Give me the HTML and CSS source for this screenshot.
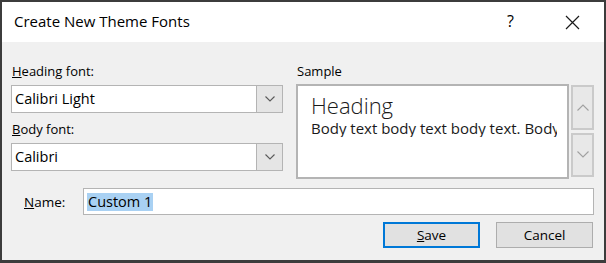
FILE: index.html
```html
<!DOCTYPE html>
<html lang="en">
<head>
    <meta charset="UTF-8">
    <meta name="viewport" content="width=device-width, initial-scale=1.0">
    <title>Create New Theme Fonts</title>
    <link rel="stylesheet" href="styles.css">
</head>
<body>
    <div class="dialog">
        <!-- Title bar -->
        <div class="titlebar">
            <span class="title">Create New Theme Fonts</span>
            <span class="help">?</span>
            <span class="close">
                <svg width="15" height="15" viewBox="0 0 15 15"><path d="M1 1 L14 14 M14 1 L1 14" stroke="#1a1a1a" stroke-width="1.2" fill="none"/></svg>
            </span>
        </div>

        <div class="content">
            <div class="top">
                <!-- Font pickers -->
                <div class="fonts">
                    <label class="field-label"><u>H</u>eading font:</label>
                    <div class="combo">
                        <span class="combo-value">Calibri Light</span>
                        <span class="combo-btn">
                            <svg width="10" height="6" viewBox="0 0 10 6"><path d="M0.5 0.5 L5 5 L9.5 0.5" stroke="#5a5a5a" stroke-width="1.1" fill="none"/></svg>
                        </span>
                    </div>
                    <label class="field-label body-label"><u>B</u>ody font:</label>
                    <div class="combo">
                        <span class="combo-value">Calibri</span>
                        <span class="combo-btn">
                            <svg width="10" height="6" viewBox="0 0 10 6"><path d="M0.5 0.5 L5 5 L9.5 0.5" stroke="#5a5a5a" stroke-width="1.1" fill="none"/></svg>
                        </span>
                    </div>
                </div>

                <!-- Sample preview -->
                <div class="sample">
                    <label class="field-label">Sample</label>
                    <div class="sample-row">
                        <div class="sample-box">
                            <div class="sample-heading">Heading</div>
                            <div class="sample-body">Body text body text body text. Body text</div>
                        </div>
                        <div class="spin">
                            <span class="spin-btn">
                                <svg width="12" height="7" viewBox="0 0 12 7"><path d="M0.5 6.5 L6 1 L11.5 6.5" stroke="#a0a0a0" stroke-width="1.1" fill="none"/></svg>
                            </span>
                            <span class="spin-btn">
                                <svg width="12" height="7" viewBox="0 0 12 7"><path d="M0.5 0.5 L6 6 L11.5 0.5" stroke="#a0a0a0" stroke-width="1.1" fill="none"/></svg>
                            </span>
                        </div>
                    </div>
                </div>
            </div>

            <!-- Name row -->
            <div class="name-row">
                <label class="name-label"><u>N</u>ame:</label>
                <div class="name-input"><span class="selected">Custom 1</span></div>
            </div>

            <!-- Buttons -->
            <div class="actions">
                <button class="btn btn-default"><u>S</u>ave</button>
                <button class="btn">Cancel</button>
            </div>
        </div>
    </div>
</body>
</html>
```

FILE: styles.css
```css
body {
    margin: 0;
    padding: 0;
    background-color: #fff;
    font-family: "Open Sans", "Noto Sans", sans-serif;
    color: #000;
}

.dialog {
    width: 606px;
    height: 263px;
    box-sizing: border-box;
    border: 2px solid #3c3c3c;
    border-bottom-width: 3px;
    background-color: #f0f0f0;
    display: flex;
    flex-direction: column;
}

.titlebar {
    height: 40px;
    background-color: #fff;
    display: flex;
    align-items: center;
    padding-left: 12px;
}

.title {
    flex: 1;
    font-size: 15px;
    padding-bottom: 2px;
}

.help {
    font-size: 16px;
    width: 14px;
    margin-right: 44px;
    padding-bottom: 2px;
}

.close {
    display: flex;
    margin-right: 24px;
}

.content {
    padding: 20px 10px 0 9px;
}

.top {
    display: grid;
    grid-template-columns: 272px minmax(0, 1fr);
    column-gap: 13px;
}

.field-label {
    display: block;
    font-size: 13px;
    line-height: 18px;
    padding-left: 1px;
    margin-bottom: 5px;
}

.body-label {
    margin-top: 7px;
}

.combo {
    height: 28px;
    box-sizing: border-box;
    border: 1px solid #b4b4b4;
    background-color: #fff;
    display: flex;
}

.combo-value {
    flex: 1;
    font-size: 14.5px;
    line-height: 26px;
    padding-left: 3px;
}

.combo-btn {
    width: 25px;
    background-color: #e5e5e5;
    border-left: 1px solid #b4b4b4;
    display: flex;
    align-items: center;
    justify-content: center;
}

.sample {
    min-width: 0;
}

.sample-row {
    display: flex;
    gap: 2px;
    margin-top: -1px;
}

.sample-box {
    flex: 1;
    min-width: 0;
    height: 95px;
    box-sizing: border-box;
    border: 2px solid #b4b4b4;
    background-color: #fff;
    padding: 5px 0 0 13px;
    overflow: hidden;
    white-space: nowrap;
}

.sample-heading {
    font-weight: 300;
    font-size: 22px;
    line-height: 28px;
    color: #1a1a1a;
}

.sample-body {
    font-size: 15px;
    line-height: 18px;
    margin-right: 10px;
    overflow: hidden;
    color: #1a1a1a;
}

.spin {
    width: 23px;
    flex-shrink: 0;
    display: flex;
    flex-direction: column;
    gap: 3px;
    padding: 1px 0 2px;
}

.spin-btn {
    flex: 1;
    box-sizing: border-box;
    border: 2px solid #cacaca;
    background-color: #e8e8e8;
    display: flex;
    align-items: center;
    justify-content: center;
}

.name-row {
    display: flex;
    align-items: center;
    margin-top: 9px;
    padding-left: 13px;
}

.name-label {
    width: 59px;
    font-size: 13.5px;
}

.name-input {
    flex: 1;
    height: 27px;
    box-sizing: border-box;
    border: 1px solid #b4b4b4;
    background-color: #fff;
    display: flex;
    align-items: center;
    padding-left: 3px;
}

.selected {
    background-color: #a9d1f3;
    font-size: 14.5px;
    line-height: 18px;
    padding: 0 1px;
}

.actions {
    display: flex;
    justify-content: flex-end;
    gap: 16px;
    margin-top: 7px;
    padding-right: 1px;
}

.btn {
    width: 97px;
    height: 26px;
    font-family: "Open Sans", "Noto Sans", sans-serif;
    font-size: 13.5px;
    color: #000;
    background-color: #e1e1e1;
    border: 1px solid #adadad;
    padding: 0;
}

.btn-default {
    border: 2px solid #0078d7;
}
```
